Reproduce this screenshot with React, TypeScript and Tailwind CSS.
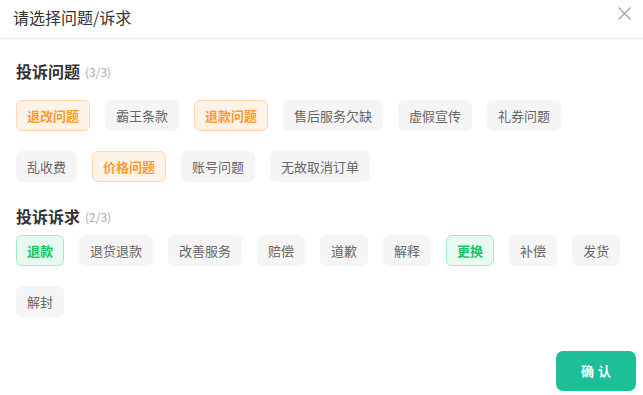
import React from "react";

type Tone = "none" | "orange" | "green";

const Tag = ({ label, tone = "none" }: { label: string; tone?: Tone }) => {
  const cls =
    tone === "orange"
      ? "bg-[#fff3e8] border-[#ffd5ab] text-[#ff9a2e] font-bold"
      : tone === "green"
      ? "bg-[#e8faef] border-[#a6e9c2] text-[#15c463] font-bold"
      : "bg-[#f5f5f5] border-[#f5f5f5] text-[#666666]";
  return (
    <div
      className={`h-[31px] px-[10px] border rounded-[6px] flex items-center text-[13px] leading-none whitespace-nowrap ${cls}`}
    >
      {label}
    </div>
  );
};

export default function App() {
  const font = { fontFamily: '"Noto Sans CJK SC", "Noto Sans", sans-serif' };
  const s1: [string, Tone][] = [
    ["退改问题", "orange"],
    ["霸王条款", "none"],
    ["退款问题", "orange"],
    ["售后服务欠缺", "none"],
    ["虚假宣传", "none"],
    ["礼券问题", "none"],
    ["乱收费", "none"],
    ["价格问题", "orange"],
    ["账号问题", "none"],
    ["无故取消订单", "none"],
  ];
  const s2: [string, Tone][] = [
    ["退款", "green"],
    ["退货退款", "none"],
    ["改善服务", "none"],
    ["赔偿", "none"],
    ["道歉", "none"],
    ["解释", "none"],
    ["更换", "green"],
    ["补偿", "none"],
    ["发货", "none"],
    ["解封", "none"],
  ];
  return (
    <div className="w-[643px] h-[395px] bg-white relative overflow-hidden" style={font}>
      <div className="h-[39px] border-b border-[#ebebeb] flex items-center justify-between pl-[13px] pr-[12px]">
        <div className="text-[16px] text-[#333333] leading-none -mt-[4px]">请选择问题/诉求</div>
        <svg width="13" height="13" viewBox="0 0 13 13" className="-mt-[12px]">
          <path d="M0.5 0.5 L12.5 12.5 M12.5 0.5 L0.5 12.5" stroke="#9a9a9a" strokeWidth="1.1" fill="none" />
        </svg>
      </div>
      <div className="px-[16px]">
        <div className="mt-[20px] h-[24px] flex items-center gap-[5px]">
          <span className="text-[16px] font-bold text-[#333333]">投诉问题</span>
          <span className="text-[12px] text-[#aaaaaa] mt-[2px]">(3/3)</span>
        </div>
        <div className="mt-[17px] flex flex-wrap gap-x-[15px] gap-y-[20px] pr-[50px]">
          {s1.map(([l, t]) => (
            <Tag key={l} label={l} tone={t} />
          ))}
        </div>
        <div className="mt-[22px] h-[24px] flex items-center gap-[5px]">
          <span className="text-[16px] font-bold text-[#333333]">投诉诉求</span>
          <span className="text-[12px] text-[#aaaaaa] mt-[2px]">(2/3)</span>
        </div>
        <div className="mt-[7px] flex flex-wrap gap-x-[15px] gap-y-[20px]">
          {s2.map(([l, t]) => (
            <Tag key={l} label={l} tone={t} />
          ))}
        </div>
      </div>
      <div className="flex justify-end pr-[7px] mt-[34px]">
        <button className="w-[80px] h-[40px] rounded-[7px] bg-[#1dbf99] text-white text-[13px] font-bold tracking-[4px] pl-[4px]">
          确认
        </button>
      </div>
    </div>
  );
}
